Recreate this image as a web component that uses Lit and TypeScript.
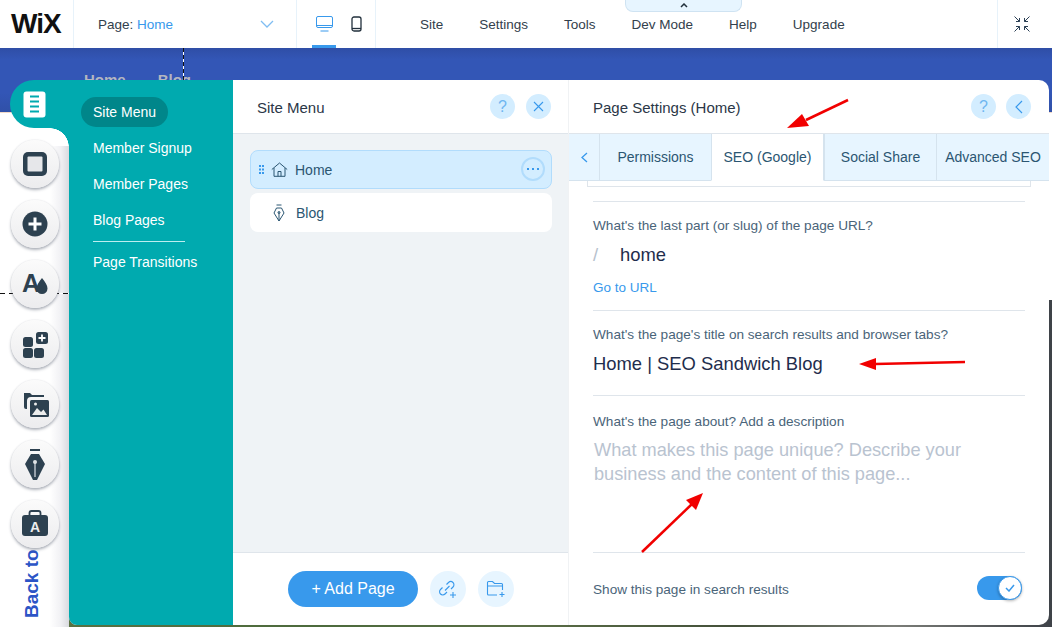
import { LitElement, html, css, svg } from "lit";
import { customElement } from "lit/decorators.js";

const INK = "#2d4150";

const railIcons = [
  svg`<rect x="12" y="12" width="24" height="24" rx="5" fill="${INK}"/><rect x="16.5" y="16.5" width="15" height="15" rx="1" fill="#e6e7ea"/>`,
  svg`<circle cx="24" cy="24" r="12.5" fill="${INK}"/><path d="M24 17.5v13M17.5 24h13" stroke="#fff" stroke-width="3"/>`,
  svg`<text x="11" y="32" font-family="Liberation Sans" font-weight="700" font-size="25" fill="${INK}">A</text><path d="M31 18c3 4 5.500 7 5.500 10.500a5.500 5.500 0 0 1-11 0c0-3.500 2.500-6.500 5.500-10.500z" fill="${INK}"/>`,
  svg`<rect x="12" y="17" width="10" height="10" rx="2.500" fill="${INK}"/><rect x="12" y="28" width="10" height="10" rx="2.500" fill="${INK}"/><rect x="23" y="28" width="10" height="10" rx="2.500" fill="${INK}"/><rect x="25" y="12" width="12" height="12" rx="2.500" fill="${INK}"/><path d="M31 14.500v7M27.500 18h7" stroke="#fff" stroke-width="1.800"/>`,
  svg`<path d="M13 13h6l2 2h12v2H20a4 4 0 0 0-4 4v8h-1a2 2 0 0 1-2-2z" fill="${INK}"/><rect x="19" y="20" width="19" height="17" rx="1.500" fill="${INK}"/><path d="M21 35l5-7 4 4 2.500-2.500L36 35z" fill="#eceded"/><circle cx="24.500" cy="24" r="1.500" fill="#eceded"/>`,
  svg`<rect x="19" y="9" width="10" height="2" fill="${INK}"/><path d="M20 14h8l6 10-8 16h-4l-8-16z" fill="${INK}"/><path d="M24 22v15" stroke="#b8c0c8" stroke-width="1.500"/><circle cx="24" cy="22" r="2" fill="#dfe3e6"/>`,
  svg`<path d="M18.500 15v-2a2 2 0 0 1 2-2h7a2 2 0 0 1 2 2v2" fill="none" stroke="${INK}" stroke-width="1.800"/><rect x="11" y="15" width="26" height="21" rx="3" fill="${INK}"/><text x="24" y="32" text-anchor="middle" font-family="Liberation Sans" font-weight="700" font-size="14" fill="#eceded">A</text>`,
];

const topMenu = ["Site", "Settings", "Tools", "Dev Mode", "Help", "Upgrade"];
const siteLinks = ["Member Signup", "Member Pages", "Blog Pages"];
const tabs = ["Permissions", "SEO (Google)", "Social Share", "Advanced SEO"];

@customElement("app-root")
export class AppRoot extends LitElement {
  static styles = css`
    :host {
      display: block;
      width: 1052px;
      height: 627px;
      overflow: hidden;
      position: relative;
      background: #fff;
      font-family: "Liberation Sans", Arial, sans-serif;
      color: #2b5672;
    }
    .top {
      height: 48px;
      display: flex;
      background: #fff;
      position: relative;
      font-size: 14px;
      color: #32404c;
    }
    .sec { border-right: 1px solid #e7f2fa; display: flex; align-items: center; box-sizing: border-box; }
    .logo { width: 74px; padding-left: 11px; font-weight: 700; font-size: 28px; letter-spacing: -1px; color: #111; }
    .page { width: 223px; padding: 0 22px 0 24px; justify-content: space-between; font-size: 13.500px; }
    .page em { font-style: normal; color: #3899ec; }
    .views { width: 79px; position: relative; padding-left: 19px; gap: 18px; }
    .views::after { content: ""; position: absolute; left: 15px; bottom: 0; width: 24px; height: 3px; background: #3899ec; }
    .menu { flex: 1; display: flex; align-items: center; gap: 36px; padding-left: 44px; font-size: 13.500px; }
    .collapse { width: 55px; border-right: 0; border-left: 1px solid #e7f2fa; justify-content: center; padding-right: 7px; }
    .dev {
      position: absolute; left: 625px; top: 0; width: 117px; height: 12px; box-sizing: border-box;
      background: #e7f5ff; border: 1px solid #cfe3f2; border-top: 0; border-radius: 0 0 8px 8px;
      display: flex; justify-content: center; align-items: center;
    }
    .stage { position: relative; height: 579px; display: flex; padding-top: 32px; box-sizing: border-box; }
    .site { position: absolute; inset: 0; overflow: hidden; }
    .band {
      height: 65px; background: linear-gradient(#2f4ea6, #3356b6 18%, #3356b6 70%, #3050a8);
      display: flex; gap: 32px; padding: 23px 0 0 84px; box-sizing: border-box;
      font-size: 15px; font-weight: 700; color: #b4b6c0; border-bottom: 1px solid #f2d9c8;
    }
    .photo {
      position: absolute; left: 0; right: 0; top: 252px; bottom: 0;
      background: linear-gradient(90deg, #5d7344, #4c6a3c 30%, #5a6e46 50%, #44503a 70%, #7b7d78 85%, #3e4248);
    }
    .dashv { position: absolute; left: 183px; top: 0; height: 32px; width: 1px; background: repeating-linear-gradient(#111 0 4px, #fff 4px 7px); }
    .dashh { position: absolute; left: 0; right: 0; top: 245px; height: 1px; z-index: 1; background: repeating-linear-gradient(90deg, #111 0 5px, #fff 5px 9px); }
    .rail {
      width: 69px; flex: none; position: relative; display: flex; flex-direction: column;
      background: linear-gradient(90deg, #fff 72%, #f1f1f4 88%, #d9dadf) no-repeat 0 66px / 100% 100%;
    }
    .railtab {
      margin-left: 10px; width: 59px; height: 48px; flex: none; background: #00aaaf; border-radius: 24px 0 0 24px;
      position: relative; display: flex; align-items: center; padding-left: 13px; box-sizing: border-box;
    }
    .railtab::after {
      content: ""; position: absolute; right: 0; top: 100%; width: 19px; height: 19px;
      background: radial-gradient(circle 19px at 0 100%, transparent 18.500px, #00aaaf 19px);
    }
    .circles { display: flex; flex-direction: column; gap: 12px; padding: 12px 0 0 11px; position: relative; z-index: 1; }
    .circle {
      width: 48px; height: 48px; border-radius: 50%;
      background: linear-gradient(#fbfbfb, #ececee);
      box-shadow: 0 2px 3px rgba(60, 70, 90, .4), 0 0 2px rgba(60, 70, 90, .15);
    }
    .circle svg { display: block; }
    .back {
      writing-mode: vertical-rl; transform: rotate(180deg); font-weight: 700; font-size: 19px; line-height: 22px;
      color: #2c55c6; margin-left: 21px; height: 70px; width: 22px; white-space: nowrap;
    }
    .panel {
      width: 980px; height: 545px; display: flex; position: relative; z-index: 2; background: #fff; border-radius: 0 10px 10px 8px; overflow: hidden;
    }
    .teal { width: 164px; flex: none; background: #00aaaf; color: #fff; font-size: 14px; padding: 17px 0 0 12px; box-sizing: border-box; display: flex; flex-direction: column; align-items: flex-start; }
    .pill { height: 30px; line-height: 30px; padding: 0 12px; border-radius: 15px; background: #00868a; margin-bottom: 3px; }
    .tl { height: 36px; line-height: 36px; padding-left: 12px; }
    .tline { width: 92px; height: 1px; background: #bdeef0; margin: 3px 0 2px 12px; }
    .col { width: 335px; flex: none; border-right: 1px solid #f0f2f4; display: flex; flex-direction: column; }
    .head {
      height: 54px; flex: none; box-sizing: border-box; border-bottom: 1px solid #dfe5eb; display: flex; align-items: center;
      padding: 0 17px 0 24px; font-size: 15px; color: #2b3747; gap: 11px;
    }
    .head .t { flex: 1; padding-top: 1px; }
    .rbtn { width: 25px; height: 25px; border-radius: 50%; background: #d3edff; color: #6fb6f0; display: flex; align-items: center; justify-content: center; font-size: 16px; }
    .list { flex: 1; background: #eff3f6; padding: 16px 16px 0 17px; display: flex; flex-direction: column; gap: 4px; }
    .row {
      height: 39px; border-radius: 8px; background: #fff; display: flex; align-items: center; font-size: 14px; color: #2b5672; box-sizing: border-box; position: relative;
    }
    .row.sel { background: #d3edff; border: 1px solid #b1dcfc; }
    .row svg { flex: none; }
    .dots { margin-left: 8px; }
    .house { margin: 0 7px 0 7px; }
    .nib { margin: 0 11px 0 23px; }
    .more { position: absolute; right: 6px; top: 6px; width: 24px; height: 24px; box-sizing: border-box; border: 2px solid #b1dcfc; border-radius: 50%; display: flex; align-items: center; justify-content: center; }
    .foot { height: 73px; flex: none; border-top: 1px solid #dfe5eb; box-sizing: border-box; display: flex; align-items: flex-start; padding: 18px 0 0 55px; gap: 12px; }
    .add { width: 130px; height: 36px; border-radius: 18px; background: #3899ec; color: #fff; font-size: 16px; display: flex; align-items: center; justify-content: center; }
    .fbtn { width: 36px; height: 36px; border-radius: 50%; background: #e7f5ff; display: flex; align-items: center; justify-content: center; }
    .settings { flex: 1; display: flex; flex-direction: column; min-width: 0; }
    .settings .head { padding-right: 18px; gap: 10px; }
    .tabs { height: 47px; flex: none; display: flex; background: #e7f5ff; border-bottom: 1px solid #d5e3ee; box-sizing: border-box; font-size: 14px; }
    .tab { display: flex; align-items: center; justify-content: center; border-left: 1px solid #d5e3ee; box-sizing: border-box; margin-bottom: -1px; border-bottom: 1px solid #d5e3ee; color: #2b5672; }
    .tab.on { background: #fff; border-bottom-color: #fff; border-right: 1px solid #d5e3ee; }
    .tback { width: 30px; border-left: 0; }
    .tw0 { width: 112px; } .tw1 { width: 113px; } .tw2 { width: 112px; } .tw3 { width: 113px; white-space: nowrap; }
    .frag { height: 6px; box-sizing: border-box; margin: 0 18px; border: 1px solid #dfe5eb; border-top: 0; flex: none; }
    .form { padding: 14px 24px 0; flex: 1; display: flex; flex-direction: column; }
    .s { border-top: 1px solid #dfe5eb; box-sizing: border-box; padding-top: 15px; flex: none; }
    .s1 { height: 109px; } .s2 { height: 85px; } .s3 { height: 157px; padding-top: 17px; }
    .s4 { flex: 1; border-top: 1px solid #dfe5eb; display: flex; align-items: flex-start; justify-content: space-between; padding: 23px 3px 0 0; }
    .s4 .label { margin-top: 5px; }
    .label { font-size: 13.600px; line-height: 18px; color: #4a6479; }
    .val { font-size: 18.400px; line-height: 24px; color: #1f2d4c; margin-top: 8px; }
    .slash { color: #b6c1cd; display: inline-block; width: 27px; }
    .goto { font-size: 13.500px; line-height: 18px; color: #3899ec; margin-top: 12px; }
    .ph { font-size: 18.200px; line-height: 24px; color: #b9c3d0; margin-top: 7px; padding-left: 1px; }
    .switch { width: 45px; height: 24px; border-radius: 12px; background: #3899ec; position: relative; }
    .knob {
      position: absolute; right: 0; top: 0; width: 24px; height: 24px; box-sizing: border-box; border-radius: 50%; background: #fff; border: 1px solid #3899ec;
      box-shadow: 0 1px 3px rgba(0, 0, 0, .3); display: flex; align-items: center; justify-content: center;
    }
    .arrows { position: absolute; inset: 0; pointer-events: none; z-index: 3; }
  `;

  render() {
    return html`
      <div class="top">
        <div class="sec logo">WiX</div>
        <div class="sec page">
          <div>Page: <em>Home</em></div>
          <svg width="14" height="8" viewBox="0 0 14 8"><path d="M1 1l6 6 6-6" fill="none" stroke="#7fbdf2" stroke-width="1.300"/></svg>
        </div>
        <div class="sec views">
          <svg width="17" height="16" viewBox="0 0 17 16" fill="none" stroke="#3899ec" stroke-width="1"><rect x=".5" y=".5" width="16" height="11" rx="1.500"/><path d="M.5 9.500h16M4.500 15h8"/></svg>
          <svg width="11" height="16" viewBox="0 0 11 16" fill="none" stroke="#22303c" stroke-width="1.300"><rect x="1" y="1" width="9" height="14" rx="2"/><path d="M1 12.500h9"/></svg>
        </div>
        <div class="menu">${topMenu.map((m) => html`<div>${m}</div>`)}</div>
        <div class="sec collapse">
          <svg width="18" height="18" viewBox="0 0 18 18" fill="none" stroke="#2b3f55" stroke-width="1"><path d="M1.500 1.500l5 5M3 6.500h3.500V3M16.500 1.500l-5 5M15 6.500h-3.500V3M1.500 16.500l5-5M3 11.500h3.500V15M16.500 16.500l-5-5M15 11.500h-3.500V15"/></svg>
        </div>
        <div class="dev"><svg width="8" height="5" viewBox="0 0 8 5"><path d="M1 4l3-3 3 3" fill="none" stroke="#22303c" stroke-width="1.500"/></svg></div>
      </div>

      <div class="stage">
        <div class="site">
          <div class="band"><span>Home</span><span>Blog</span></div>
          <div class="photo"></div>
          <div class="dashv"></div>
          <div class="dashh"></div>
        </div>

        <div class="rail">
          <div class="railtab">
            <svg width="23" height="27" viewBox="0 0 23 27"><rect width="22" height="26" x=".5" y=".5" rx="3" fill="#fff"/><path d="M7 5.500h9M7 10.500h9M7 15.500h9M7 20.500h9" stroke="#00aaaf" stroke-width="2.200"/></svg>
          </div>
          <div class="circles">
            ${railIcons.map((i) => html`<div class="circle"><svg width="48" height="48" viewBox="0 0 48 48">${i}</svg></div>`)}
          </div>
          <div class="back">Back to</div>
        </div>

        <div class="panel">
          <div class="teal">
            <div class="pill">Site Menu</div>
            ${siteLinks.map((l) => html`<div class="tl">${l}</div>`)}
            <div class="tline"></div>
            <div class="tl">Page Transitions</div>
          </div>

          <div class="col">
            <div class="head">
              <div class="t">Site Menu</div>
              <div class="rbtn">?</div>
              <div class="rbtn"><svg width="11" height="11" viewBox="0 0 11 11"><path d="M1 1l9 9M10 1l-9 9" stroke="#3899ec" stroke-width="1.100"/></svg></div>
            </div>
            <div class="list">
              <div class="row sel">
                <svg class="dots" width="5" height="9" viewBox="0 0 5 9"><path d="M0 0h2v2H0zM3 0h2v2H3zM0 3.500h2v2H0zM3 3.500h2v2H3zM0 7h2v2H0zM3 7h2v2H3z" fill="#3899ec"/></svg>
                <svg class="house" width="17" height="15" viewBox="0 0 17 15" fill="none" stroke="#2b5672" stroke-width="1"><path d="M.8 7.500L8.500 1l7.700 6.500M3 6v8.300h11V6M7 14.300V9.500h3v4.800"/></svg>
                <span>Home</span>
                <div class="more"><svg width="12" height="2" viewBox="0 0 12 2"><path d="M0 0h2v2H0zM5 0h2v2H5zM10 0h2v2h-2z" fill="#3899ec"/></svg></div>
              </div>
              <div class="row">
                <svg class="nib" width="12" height="18" viewBox="0 0 12 18" fill="none" stroke="#2b5672" stroke-width="1"><path d="M3.500 1h5M3.500 4h5L11 9l-5 8-5-8zM6 8v9"/><circle cx="6" cy="8.500" r="1"/></svg>
                <span>Blog</span>
              </div>
            </div>
            <div class="foot">
              <div class="add">+ Add Page</div>
              <div class="fbtn"><svg width="20" height="20" viewBox="0 0 20 20" fill="none" stroke="#3899ec" stroke-width="1.100"><path d="M8.500 5.500l2-2a3 3 0 0 1 4.500 4.500l-2 2M9 13l-2 2a3 3 0 0 1-4.500-4.500l2-2M7 11.500l4.500-4.500M15 13v6M12 16h6"/></svg></div>
              <div class="fbtn"><svg width="20" height="18" viewBox="0 0 20 18" fill="none" stroke="#3899ec" stroke-width="1.100"><path d="M11 15H2.500a1 1 0 0 1-1-1V2.500a1 1 0 0 1 1-1h4l2 2h7a1 1 0 0 1 1 1V10M1.500 6h15M16 12v5M13.500 14.500h5"/></svg></div>
            </div>
          </div>

          <div class="settings">
            <div class="head">
              <div class="t">Page Settings (Home)</div>
              <div class="rbtn">?</div>
              <div class="rbtn"><svg width="8" height="14" viewBox="0 0 8 14"><path d="M7 1L1 7l6 6" fill="none" stroke="#3899ec" stroke-width="1.200"/></svg></div>
            </div>
            <div class="tabs">
              <div class="tab tback"><svg width="7" height="11" viewBox="0 0 7 11"><path d="M6 1L1 5.500 6 10" fill="none" stroke="#3899ec" stroke-width="1.300"/></svg></div>
              ${tabs.map((t, i) => html`<div class="tab tw${i} ${i === 1 ? "on" : ""}">${t}</div>`)}
            </div>
            <div class="frag"></div>
            <div class="form">
              <div class="s s1">
                <div class="label">What's the last part (or slug) of the page URL?</div>
                <div class="val"><span class="slash">/</span>home</div>
                <div class="goto">Go to URL</div>
              </div>
              <div class="s s2">
                <div class="label">What's the page's title on search results and browser tabs?</div>
                <div class="val">Home | SEO Sandwich Blog</div>
              </div>
              <div class="s s3">
                <div class="label">What's the page about? Add a description</div>
                <div class="ph">What makes this page unique? Describe your<br />business and the content of this page...</div>
              </div>
              <div class="s4">
                <div class="label">Show this page in search results</div>
                <div class="switch"><div class="knob"><svg width="10" height="8" viewBox="0 0 10 8"><path d="M1 4l3 3 5-6" fill="none" stroke="#3899ec" stroke-width="1.500"/></svg></div></div>
              </div>
            </div>
          </div>
        </div>
      </div>

      <svg class="arrows" viewBox="0 0 1052 627" fill="#f10000" stroke="none">
        <path d="M848 100L806 120" stroke="#f10000" stroke-width="2.500"/><path d="M787 128l15-14 7 12z"/>
        <path d="M965 362L875 364" stroke="#f10000" stroke-width="2.500"/><path d="M859 364l17-6v12z"/>
        <path d="M642 552L692 504" stroke="#f10000" stroke-width="2.500"/><path d="M703 493l-7 17-10-10z"/>
      </svg>
    `;
  }
}
